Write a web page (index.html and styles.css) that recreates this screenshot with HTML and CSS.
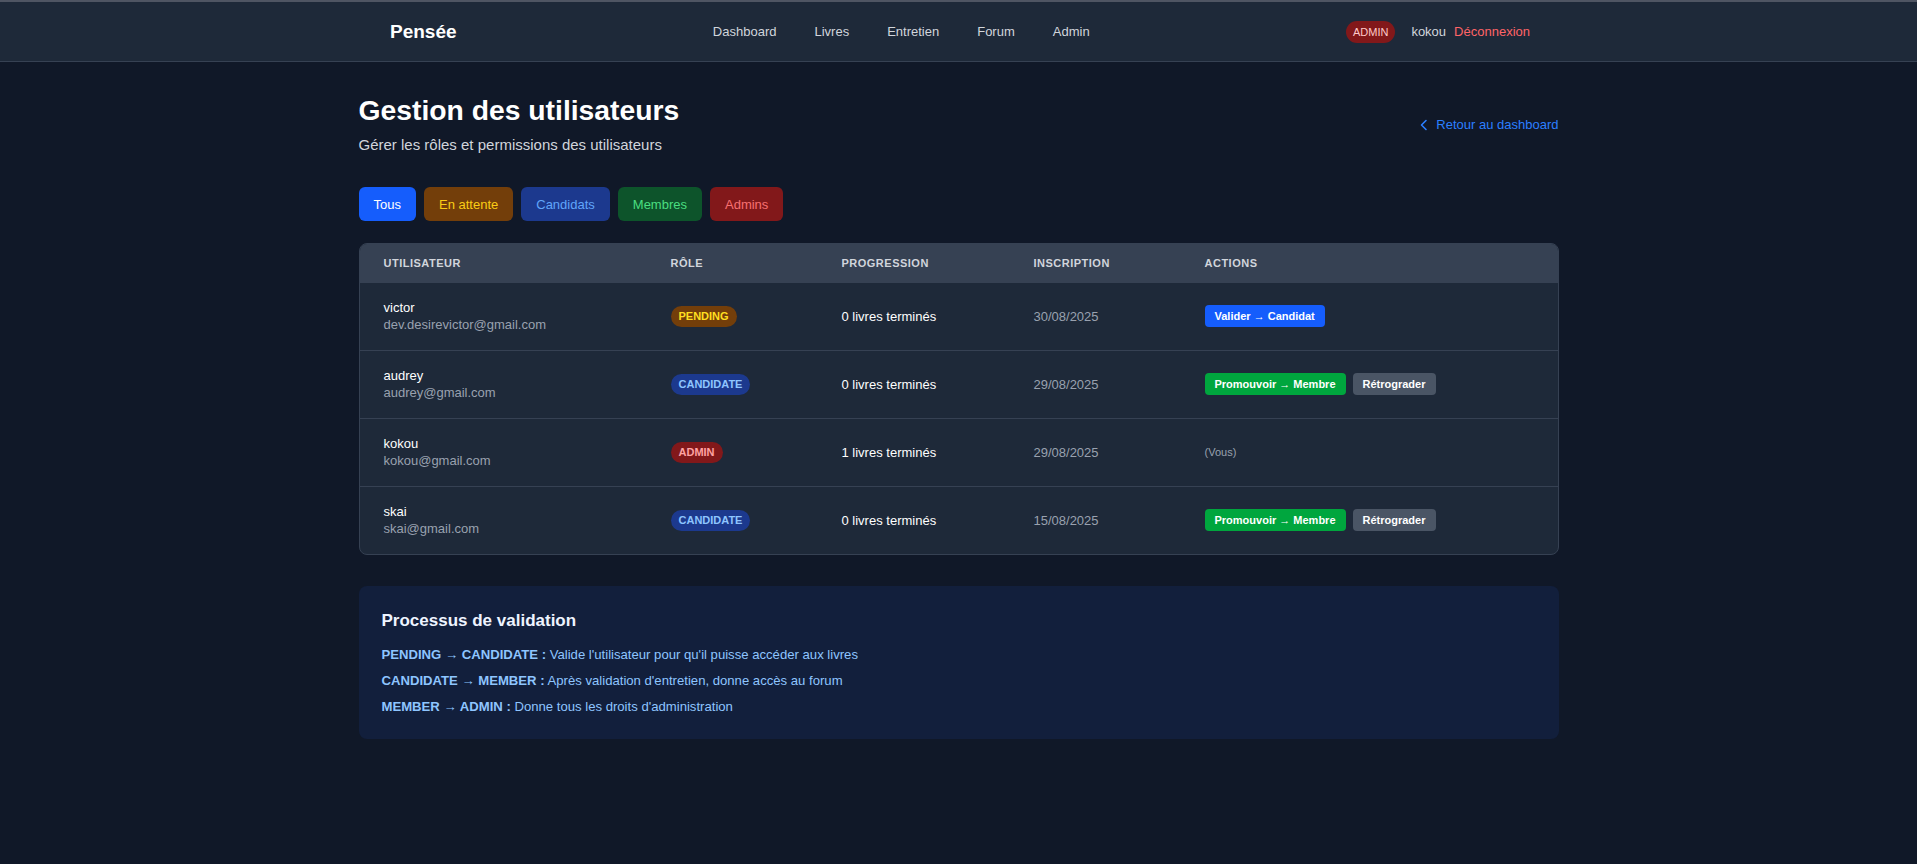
FILE: index.html
```html
<!DOCTYPE html>
<html lang="fr">
<head>
<meta charset="utf-8">
<title>Gestion des utilisateurs - Pensée</title>
<link rel="stylesheet" href="styles.css">
</head>
<body>
<header class="nav">
  <div class="nav-inner">
    <a class="logo" href="#">Pensée</a>
    <nav class="links">
      <a href="#">Dashboard</a>
      <a href="#">Livres</a>
      <a href="#">Entretien</a>
      <a href="#">Forum</a>
      <a href="#">Admin</a>
    </nav>
    <div class="user">
      <span class="role-pill">ADMIN</span>
      <span class="username">kokou</span>
      <a class="logout" href="#">Déconnexion</a>
    </div>
  </div>
</header>

<main class="page">
  <div class="page-head">
    <div>
      <h1 class="title">Gestion des utilisateurs</h1>
      <p class="subtitle">Gérer les rôles et permissions des utilisateurs</p>
    </div>
    <a class="back" href="#">
      <svg width="10" height="12" viewBox="0 0 10 12" fill="none"><path d="M7 1.5 2.5 6 7 10.5" stroke="#2b7fff" stroke-width="1.6" stroke-linecap="round" stroke-linejoin="round"/></svg>
      Retour au dashboard
    </a>
  </div>

  <div class="filters">
    <button class="filter f-all">Tous</button>
    <button class="filter f-pending">En attente</button>
    <button class="filter f-cand">Candidats</button>
    <button class="filter f-member">Membres</button>
    <button class="filter f-admin">Admins</button>
  </div>

  <section class="card">
    <div class="row head">
      <div class="cell">Utilisateur</div>
      <div class="cell">Rôle</div>
      <div class="cell">Progression</div>
      <div class="cell">Inscription</div>
      <div class="cell">Actions</div>
    </div>

    <div class="row">
      <div class="cell user-cell"><div class="name">victor</div><div class="email">dev.desirevictor@gmail.com</div></div>
      <div class="cell"><span class="badge b-pending">PENDING</span></div>
      <div class="cell prog">0 livres terminés</div>
      <div class="cell date">30/08/2025</div>
      <div class="cell actions"><button class="act a-blue">Valider → Candidat</button></div>
    </div>

    <div class="row">
      <div class="cell user-cell"><div class="name">audrey</div><div class="email">audrey@gmail.com</div></div>
      <div class="cell"><span class="badge b-cand">CANDIDATE</span></div>
      <div class="cell prog">0 livres terminés</div>
      <div class="cell date">29/08/2025</div>
      <div class="cell actions"><button class="act a-green">Promouvoir → Membre</button><button class="act a-gray">Rétrograder</button></div>
    </div>

    <div class="row">
      <div class="cell user-cell"><div class="name">kokou</div><div class="email">kokou@gmail.com</div></div>
      <div class="cell"><span class="badge b-admin">ADMIN</span></div>
      <div class="cell prog">1 livres terminés</div>
      <div class="cell date">29/08/2025</div>
      <div class="cell actions"><span class="you">(Vous)</span></div>
    </div>

    <div class="row">
      <div class="cell user-cell"><div class="name">skai</div><div class="email">skai@gmail.com</div></div>
      <div class="cell"><span class="badge b-cand">CANDIDATE</span></div>
      <div class="cell prog">0 livres terminés</div>
      <div class="cell date">15/08/2025</div>
      <div class="cell actions"><button class="act a-green">Promouvoir → Membre</button><button class="act a-gray">Rétrograder</button></div>
    </div>
  </section>

  <section class="info">
    <h2 class="info-title">Processus de validation</h2>
    <p><strong>PENDING → CANDIDATE :</strong> Valide l'utilisateur pour qu'il puisse accéder aux livres</p>
    <p><strong>CANDIDATE → MEMBER :</strong> Après validation d'entretien, donne accès au forum</p>
    <p><strong>MEMBER → ADMIN :</strong> Donne tous les droits d'administration</p>
  </section>
</main>
</body>
</html>
```

FILE: styles.css
```css
* { box-sizing: border-box; }
html, body { margin: 0; padding: 0; }
body {
  background: #101828;
  color: #fff;
  font-family: "Liberation Sans", Arial, sans-serif;
  min-height: 864px;
}
a { text-decoration: none; color: inherit; }
button { font-family: inherit; border: 0; cursor: pointer; }

.nav {
  background: #1e2939;
  border-top: 2px solid #4f5563;
  border-bottom: 1px solid #364153;
  height: 62px;
}
.nav-inner {
  width: 1143px;
  margin: 0 auto;
  padding-left: 3px;
  height: 59px;
  display: flex;
  align-items: center;
  justify-content: space-between;
}
.logo { font-size: 19px; font-weight: 700; color: #fff; }
.links { display: flex; gap: 38px; }
.links a { font-size: 13px; color: #d1d5dc; }
.user { display: flex; align-items: center; font-size: 13px; }
.role-pill {
  background: #82181a;
  color: #ffc9c9;
  font-size: 11px;
  height: 22px;
  line-height: 22px;
  padding: 0 7px;
  border-radius: 11px;
  margin-right: 16px;
}
.username { color: #d1d5dc; margin-right: 8px; }
.logout { color: #ff6467; }

.page {
  width: 1200px;
  margin: 0 auto;
  padding-top: 31px;
}
.page-head {
  display: flex;
  justify-content: space-between;
  align-items: center;
}
.title {
  margin: 0 0 7px;
  font-size: 28.3px;
  line-height: 34px;
  font-weight: 700;
}
.subtitle {
  margin: 0;
  font-size: 15px;
  line-height: 22px;
  color: #d1d5dc;
}
.back {
  display: flex;
  align-items: center;
  gap: 7px;
  color: #2b7fff;
  font-size: 13px;
}

.filters {
  display: flex;
  gap: 8px;
  margin-top: 31px;
  margin-bottom: 22px;
}
.filter {
  height: 34px;
  padding: 0 15px;
  font-size: 13px;
  border-radius: 6px;
}
.f-all { background: #155dfc; color: #fff; }
.f-pending { background: #733e0a; color: #facc15; }
.f-cand { background: #1c398e; color: #60a5fa; }
.f-member { background: #0d542b; color: #4ade80; }
.f-admin { background: #82181a; color: #f87171; }

.card {
  background: #1e2939;
  border: 1px solid #364153;
  border-radius: 8px;
  overflow: hidden;
}
.row {
  display: grid;
  grid-template-columns: 287px 171px 192px 171px 1fr;
  align-items: center;
  border-top: 1px solid #364153;
}
.row.head { border-top: 0; background: #364153; }
.cell { padding: 16px 24px 17px; font-size: 13px; }
.head .cell {
  padding: 12px 24px 11px;
  font-size: 11px;
  line-height: 15px;
  font-weight: 700;
  letter-spacing: 0.045em;
  text-transform: uppercase;
  color: #d1d5dc;
}
.name { font-weight: 500; color: #fff; line-height: 17px; }
.email { color: #99a1af; line-height: 17px; }
.prog { color: #fff; font-weight: 500; }
.date { color: #99a1af; }

.badge {
  display: inline-block;
  height: 21px;
  line-height: 21px;
  padding: 0 8px;
  border-radius: 11px;
  font-size: 11px;
  font-weight: 600;
}
.b-pending { background: #733e0a; color: #ffdf20; }
.b-cand { background: #1c398e; color: #8ec5ff; }
.b-admin { background: #82181a; color: #ffa2a2; }

.actions { display: flex; gap: 7px; align-items: center; }
.act {
  height: 22px;
  padding: 0 10px;
  font-size: 11px;
  font-weight: 700;
  color: #fff;
  border-radius: 4px;
}
.a-blue { background: #155dfc; }
.a-green { background: #00a63e; }
.a-gray { background: #4a5565; }
.you { font-size: 11px; color: #99a1af; }

.info {
  margin-top: 31px;
  background: #121f3c;
  border-radius: 8px;
  padding: 23px 23px 22px;
}
.info-title {
  margin: 0 0 12px;
  font-size: 17px;
  line-height: 24px;
  font-weight: 700;
  color: #eef4ff;
}
.info p {
  margin: 6px 0 0;
  font-size: 13.13px;
  line-height: 20px;
  color: #8ec5ff;
}
.info p:first-of-type { margin-top: 0; }
.info strong { font-weight: 700; }
```
